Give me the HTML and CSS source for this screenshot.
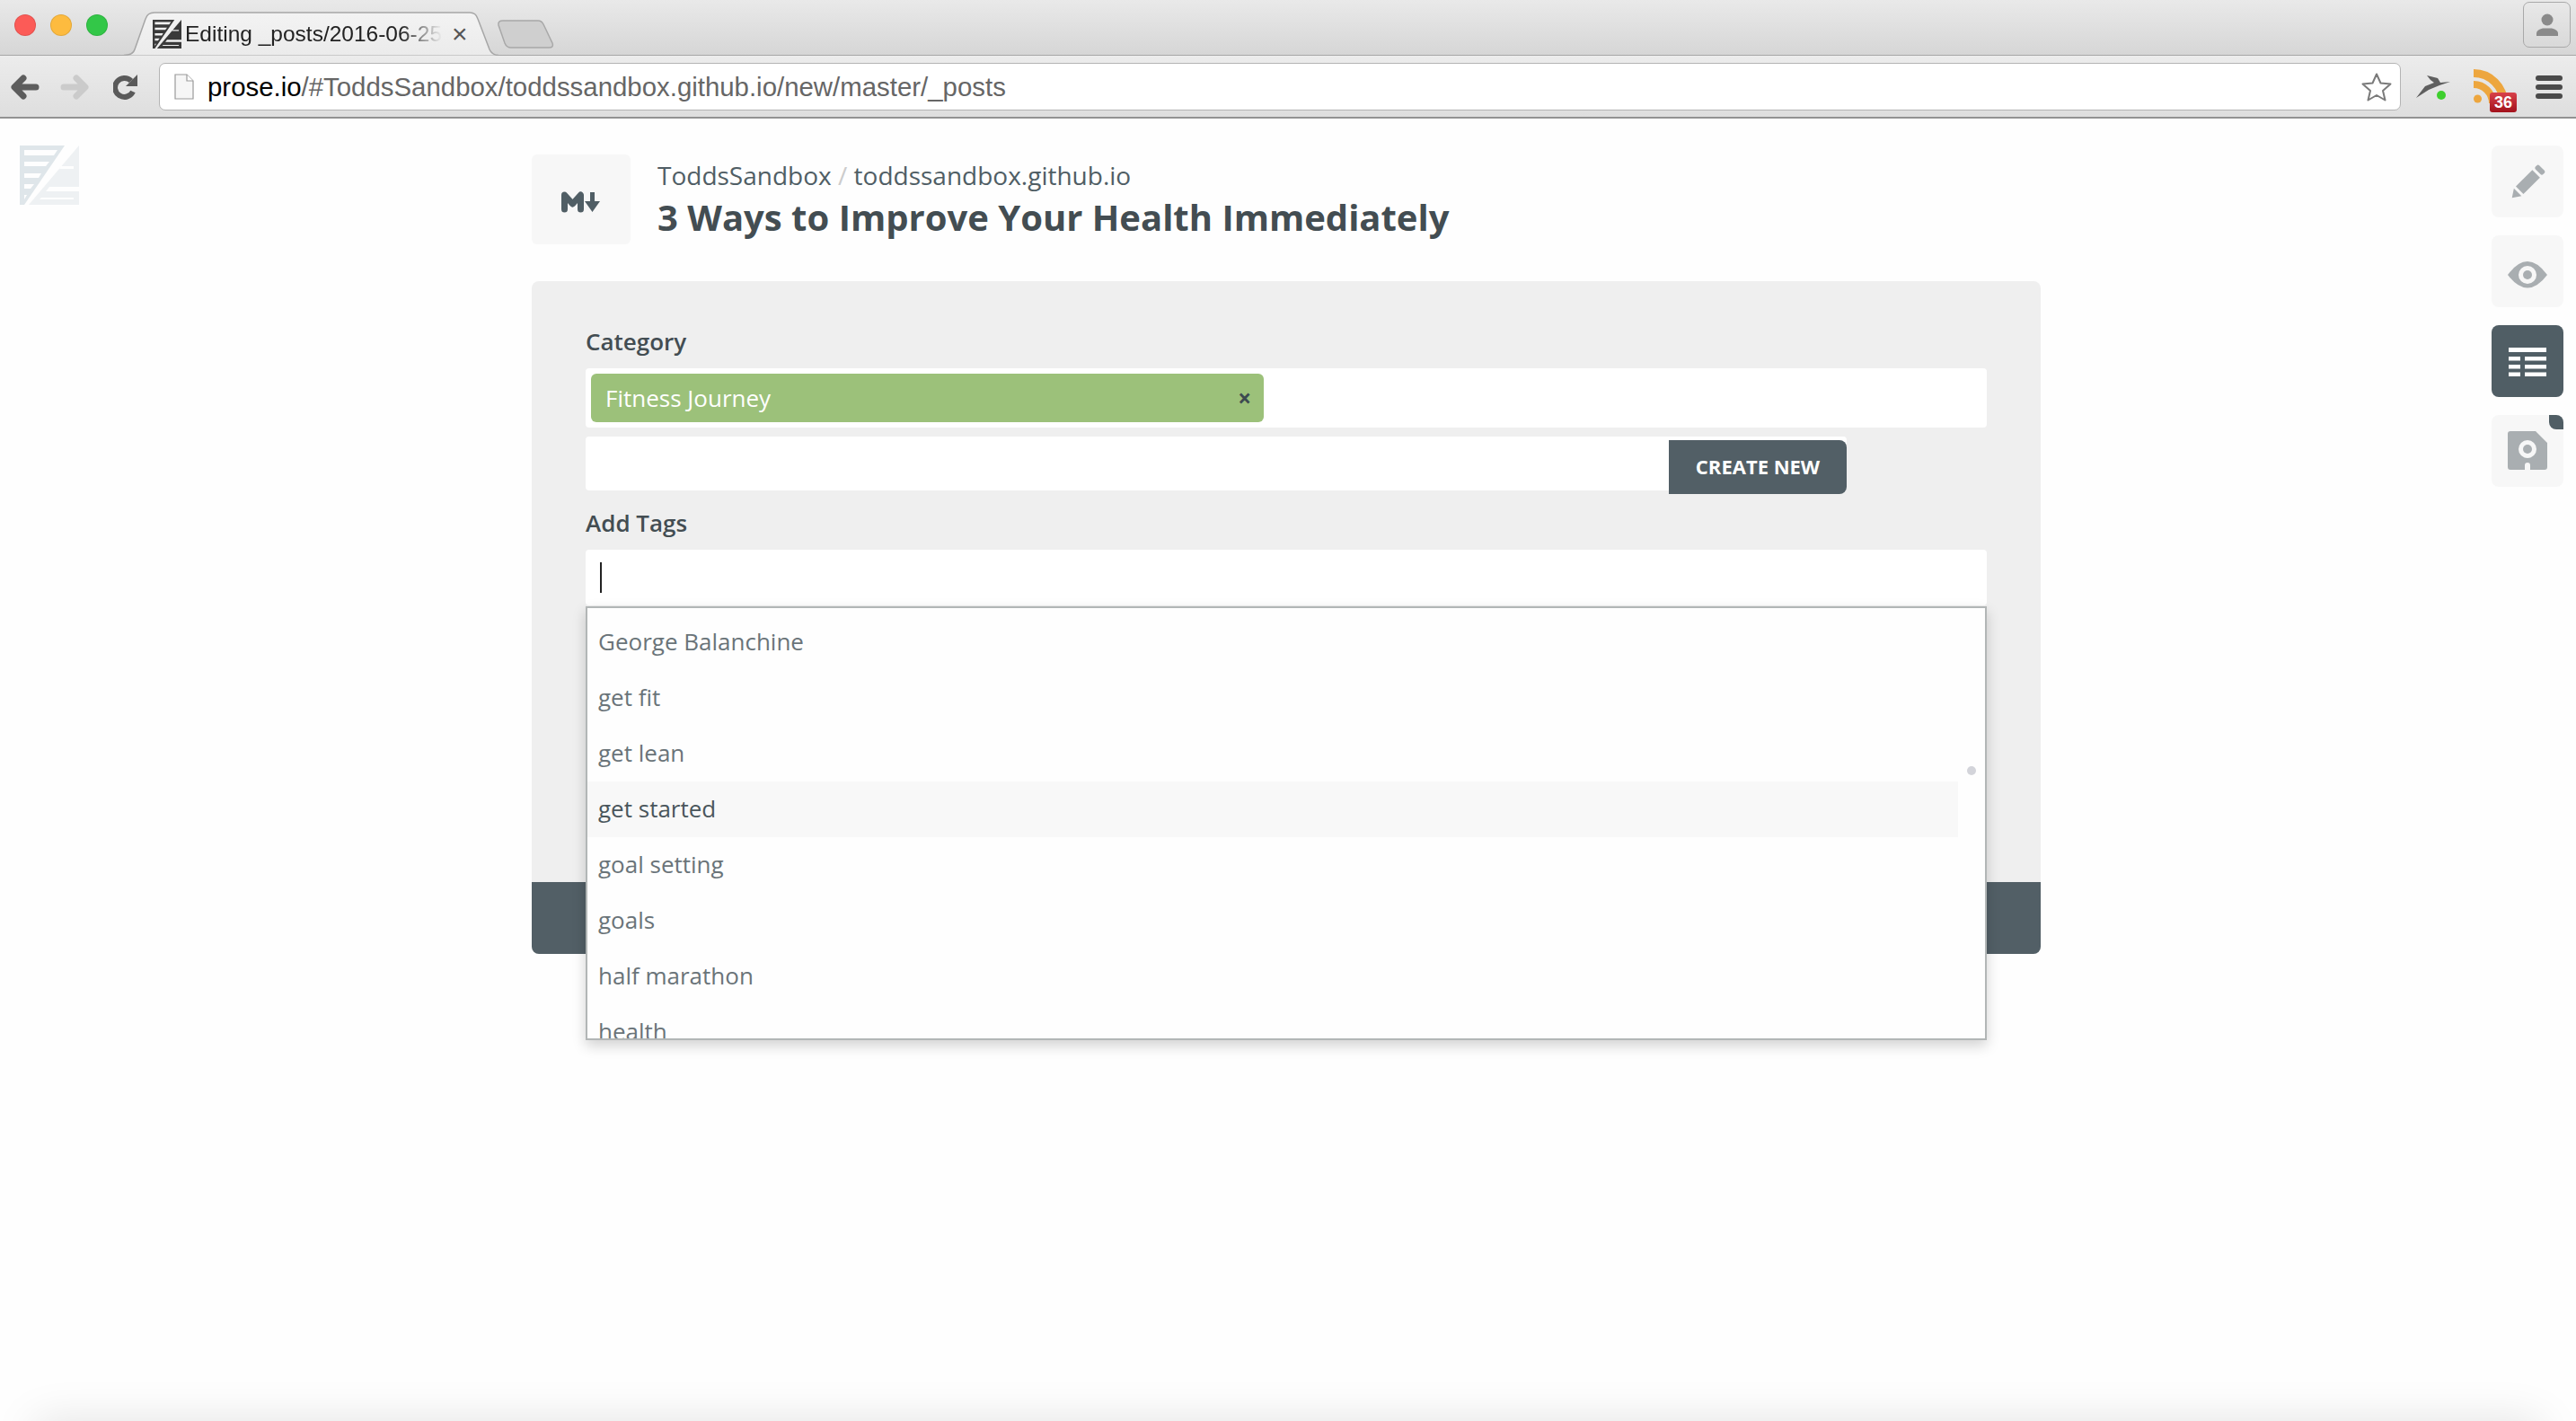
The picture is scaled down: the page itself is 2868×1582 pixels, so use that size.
FILE: index.html
```html
<!DOCTYPE html>
<html lang="en">
<head>
<meta charset="utf-8">
<title>Editing _posts/2016-06-25</title>
<link rel="stylesheet" href="styles.css">
</head>
<body>
<svg class="defs" width="0" height="0" aria-hidden="true">
  <defs>
    <linearGradient id="tabfill" x1="0" y1="0" x2="0" y2="1">
      <stop offset="0" stop-color="#f3f3f3"/>
      <stop offset="1" stop-color="#ebebeb"/>
    </linearGradient>
    <symbol id="prose" viewBox="0 0 66 66">
      <path class="pl" d="M0 0H50L5 66H0Z"/>
      <path class="pr" d="M66 0V66H10Z"/>
      <path class="ps" d="M5 5H42L38 11H5ZM5 18H33L29 23H5ZM5 31H24L21 36H5ZM5 43H16L12 48H5ZM5 55H8L5 60Z"/>
      <path class="ps" d="M46 23H60V26H44ZM33 46H66V51H29ZM24 58H60V60H22Z"/>
    </symbol>
  </defs>
</svg>
<div class="page">
  <header class="browser">
    <div class="tabbar">
      <div class="lights">
        <span class="light light-red"></span>
        <span class="light light-yellow"></span>
        <span class="light light-green"></span>
      </div>
      <div class="tab">
        <svg class="tab-shape" width="417" height="49" viewBox="0 0 417 49"><path d="M0 48.500Q10 48.500 12 42L24 8Q26 1 34 1H385Q392 1 394 8L407 42Q410 48.500 417 48.500" fill="url(#tabfill)" stroke="#a6a6a6" stroke-width="1.500"/></svg>
        <svg class="favicon" width="32" height="32"><use href="#prose"/></svg>
        <span class="tab-title">Editing _posts/2016-06-25</span>
        <span class="tab-close">×</span>
      </div>
      <svg class="newtab" width="64" height="32" viewBox="0 0 64 32"><path d="M7 1H46Q50 1 52 5L62 26Q64 31 58 31H16Q11 31 9 26L2 6Q1 1 7 1Z" fill="#cfcfcf" stroke="#a8a8a8" stroke-width="1.500"/></svg>
      <div class="profile">
        <svg width="26" height="26" viewBox="0 0 26 26"><circle cx="13" cy="7" r="6.500" fill="#8a8a8a"/><path d="M1 25V22Q1 18 8 16.500H18Q25 18 25 22V25Z" fill="#8a8a8a"/></svg>
      </div>
    </div>
    <div class="toolbar">
      <svg class="nav nav-back" width="32" height="28" viewBox="0 0 32 28"><path d="M28 14H8M14 4L4 14L14 24" fill="none" stroke="#5d5d5d" stroke-width="7" stroke-linecap="round" stroke-linejoin="round"/></svg>
      <svg class="nav nav-forward" width="32" height="28" viewBox="0 0 32 28"><path d="M4 14H24M18 4L28 14L18 24" fill="none" stroke="#cbcbcb" stroke-width="7" stroke-linecap="round" stroke-linejoin="round"/></svg>
      <svg class="nav nav-reload" width="28" height="28" viewBox="0 0 28 28"><path d="M20 7A10.500 10.500 0 1 0 22 19" fill="none" stroke="#5a5a5a" stroke-width="6"/><path d="M27 0V13H14Z" fill="#5a5a5a"/></svg>
      <div class="address">
        <svg width="22" height="29" viewBox="0 0 22 29"><path d="M1 1H14L21 8V28H1Z" fill="#f6f6f6" stroke="#9a9a9a" stroke-width="1.200"/><path d="M14 1V8H21" fill="#fff" stroke="#9a9a9a" stroke-width="1.200"/></svg>
        <span class="url"><span class="url-host">prose.io</span>/#ToddsSandbox/toddssandbox.github.io/new/master/_posts</span>
        <svg class="star" width="36" height="34" viewBox="0 0 36 34"><path d="M18 2.500L22.500 12.500L33.500 13.500L25 21L27.500 31.500L18 26L8.500 31.500L11 21L2.500 13.500L13.500 12.500Z" fill="#fff" stroke="#7a7a7a" stroke-width="2" stroke-linejoin="round"/></svg>
      </div>
      <svg class="ext-dash" width="40" height="34" viewBox="0 0 40 34"><path d="M0 30L10 17L20 13L16 10L12 5L24 8L27 13L38 12L26 16L14 21Z" fill="#5f5f5f"/><circle cx="28" cy="27" r="5" fill="#3ecf2e"/></svg>
      <div class="ext-rss">
        <svg width="38" height="38" viewBox="0 0 38 38"><circle cx="4.500" cy="33" r="4.500" fill="#eda63e"/><path d="M0 17A21 21 0 0 1 21 38" fill="none" stroke="#eda63e" stroke-width="8"/><path d="M0 4.500A33.500 33.500 0 0 1 33.500 38" fill="none" stroke="#eda63e" stroke-width="9"/></svg>
        <span class="rss-badge">36</span>
      </div>
      <div class="menu"><span></span><span></span><span></span></div>
    </div>
  </header>

  <main class="workspace">
    <aside class="rail-left">
      <svg class="logo" width="66" height="66"><use href="#prose"/></svg>
    </aside>

    <section class="center">
      <div class="heading">
        <div class="mode">
          <svg class="mode-icon" width="44" height="24" viewBox="0 0 44 24"><path d="M3.500 20V4L12.500 14L21.500 4V20" fill="none" stroke="#505e65" stroke-width="7" stroke-linecap="round" stroke-linejoin="round"/><path d="M32 1H37V11H43L34.500 23L26 11H32Z" fill="#505e65"/></svg>
        </div>
        <div class="titles">
          <div class="crumbs">ToddsSandbox <span class="slash">/</span> toddssandbox.github.io</div>
          <h1 class="title">3 Ways to Improve Your Health Immediately</h1>
        </div>
      </div>

      <div class="panel">
        <div class="panel-body">
          <label class="field-label">Category</label>
          <div class="chips">
            <div class="chip"><span>Fitness Journey</span><span class="chip-x">×</span></div>
          </div>
          <div class="create-row">
            <button class="create-btn">CREATE NEW</button>
          </div>
          <label class="field-label field-label-tags">Add Tags</label>
          <div class="tag-input"><span class="caret"></span></div>
        </div>
        <div class="panel-foot"></div>

        <div class="dropdown">
          <div class="option">George Balanchine</div>
          <div class="option">get fit</div>
          <div class="option">get lean</div>
          <div class="option option-active">get started</div>
          <div class="option">goal setting</div>
          <div class="option">goals</div>
          <div class="option">half marathon</div>
          <div class="option">health</div>
          <span class="scroll-dot"></span>
        </div>
      </div>
    </section>

    <aside class="rail-right">
      <div class="side-btn">
        <svg width="80" height="80" viewBox="0 0 80 80"><g transform="translate(-1 1) rotate(45 40 41)" fill="#a9aeb1"><rect x="34" y="17" width="12" height="6" rx="2"/><rect x="34" y="26" width="12" height="26"/><path d="M34 55H46L40 64Z"/></g></svg>
      </div>
      <div class="side-btn">
        <svg width="80" height="80" viewBox="0 0 80 80"><path d="M18 44Q40 14 62 44Q40 73 18 44Z" fill="#a9aeb1"/><circle cx="40" cy="44" r="10" fill="#f7f7f7"/><circle cx="40" cy="44" r="5" fill="#a9aeb1"/></svg>
      </div>
      <div class="side-btn side-btn-active">
        <svg width="80" height="80" viewBox="0 0 80 80"><path fill="#fff" d="M19 25H61V30H19ZM19 35H32V39.500H19ZM37 35H61V39.500H37ZM19 44H32V48.500H19ZM37 44H61V48.500H37ZM19 52.500H32V57H19ZM37 52.500H61V57H37Z"/></svg>
      </div>
      <div class="side-btn">
        <svg width="80" height="80" viewBox="0 0 80 80"><path d="M21 18H49L62 31V58A3 3 0 0 1 59 61H43V56A3 3 0 0 0 37 56V61H21A3 3 0 0 1 18 58V21A3 3 0 0 1 21 18Z" fill="#a9aeb1"/><circle cx="40" cy="38" r="10" fill="#f7f7f7"/><circle cx="40" cy="38" r="5" fill="#a9aeb1"/></svg>
        <span class="side-flag"></span>
      </div>
    </aside>
  </main>
  <div class="bottom-shadow"></div>
</div>
</body>
</html>
```
FILE: styles.css
```css
* { box-sizing: border-box; }
html, body { margin: 0; padding: 0; background: #fefefe; }
.defs { position: absolute; }
.page {
  position: relative;
  width: 2868px;
  height: 1582px;
  overflow: hidden;
  font-family: "Open Sans", "Liberation Sans", sans-serif;
  color: #505e65;
}
.pl { fill: var(--l); }
.pr { fill: var(--r); }
.ps { fill: var(--s); }

/* browser chrome */
.browser { font-family: "Liberation Sans", Arial, sans-serif; }
.tabbar {
  display: flex;
  align-items: flex-end;
  height: 62px;
  padding-left: 16px;
  background: linear-gradient(#e9e9e9, #d6d6d6);
  border-bottom: 1px solid #a6a6a6;
}
.lights { display: flex; gap: 16px; align-self: flex-start; padding-top: 16px; }
.light { width: 24px; height: 24px; border-radius: 50%; border: 1px solid rgba(0,0,0,.1); }
.light-red { background: #fc5b57; }
.light-yellow { background: #fdbb3f; }
.light-green { background: #33c748; }
.tab {
  position: relative;
  display: flex;
  align-items: flex-start;
  width: 417px;
  height: 49px;
  margin-left: 18px;
  margin-bottom: -1px;
  padding: 9px 0 0 32px;
}
.tab-shape { position: absolute; left: 0; top: 0; }
.favicon { position: relative; flex: none; --l: #3a3a3a; --r: #3a3a3a; --s: #f0f0f0; }
.tab-title {
  position: relative;
  width: 292px;
  margin-left: 4px;
  overflow: hidden;
  white-space: nowrap;
  font-size: 24.5px;
  line-height: 32px;
  color: #222;
  -webkit-mask-image: linear-gradient(to right, #000 82%, transparent 98%);
  mask-image: linear-gradient(to right, #000 82%, transparent 98%);
}
.tab-close {
  position: relative;
  margin-left: 5px;
  font-size: 30px;
  line-height: 32px;
  color: #555;
}
.newtab { flex: none; margin-left: -2px; margin-bottom: 7px; }
.profile {
  display: flex;
  align-items: center;
  justify-content: center;
  width: 53px;
  height: 51px;
  margin-left: auto;
  margin-right: 6px;
  align-self: flex-start;
  margin-top: 2px;
  border: 1px solid #a9a9a9;
  border-radius: 7px;
}
.toolbar {
  display: flex;
  align-items: center;
  height: 70px;
  padding: 1px 16px 0 12px;
  background: linear-gradient(#ececec, #dedede);
  border-bottom: 2px solid #929292;
}
.nav { flex: none; }
.nav-forward { margin-left: 23px; }
.nav-reload { margin-left: 27px; }
.address {
  display: flex;
  align-items: center;
  flex: none;
  width: 2496px;
  height: 53px;
  margin-left: 23px;
  padding: 0 8px 0 16px;
  background: #fff;
  border: 1px solid #b4b4b4;
  border-radius: 7px;
}
.url {
  margin-left: 15px;
  font-size: 29.4px;
  color: #666;
  white-space: nowrap;
}
.url-host { color: #000; }
.star { margin-left: auto; }
.ext-dash { flex: none; margin-left: 17px; margin-top: -2px; }
.ext-rss { position: relative; flex: none; width: 38px; height: 38px; margin-left: 24px; margin-top: -2px; }
.rss-badge {
  position: absolute;
  left: 18px;
  top: 26px;
  width: 30px;
  height: 22px;
  background: linear-gradient(#d8414a, #a3121c);
  border-radius: 3px;
  color: #fff;
  font-size: 18px;
  font-weight: 700;
  line-height: 22px;
  text-align: center;
}
.menu { display: flex; flex-direction: column; gap: 4px; flex: none; margin-left: 31px; }
.menu span { width: 30px; height: 6px; border-radius: 3px; background: #4a4a4a; }

/* workspace */
.workspace {
  display: grid;
  grid-template-columns: 592px 1680px 1fr;
}
.rail-left { padding: 30px 0 0 22px; }
.logo { display: block; --l: #dfe6ea; --r: #eef1f3; --s: #fefefe; }
.center { padding-top: 40px; }
.heading { display: flex; height: 100px; }
.mode {
  display: flex;
  align-items: center;
  justify-content: center;
  width: 110px;
  height: 100px;
  background: #f7f7f7;
  border-radius: 6px;
}
.mode-icon { margin-top: 5px; }
.titles { margin-left: 30px; }
.crumbs {
  margin-top: 3px;
  font-size: 28px;
  line-height: 40px;
  color: #505e65;
}
.slash { color: #ccc; }
.title {
  margin: 0;
  font-size: 40px;
  line-height: 54px;
  font-weight: 700;
  color: #434d52;
}
.panel {
  position: relative;
  height: 749px;
  margin-top: 41px;
  display: flex;
  flex-direction: column;
  background: #efefef;
  border-radius: 8px;
  overflow: visible;
}
.panel-body { flex: 1; padding: 50px 60px 0; }
.panel-foot { height: 80px; background: #525f66; border-radius: 0 0 8px 8px; }
.field-label {
  display: block;
  height: 47px;
  font-size: 26px;
  font-weight: 600;
  line-height: 34px;
  color: #434d52;
}
.field-label-tags { height: 47px; margin-top: 19px; }
.chips {
  display: flex;
  height: 66px;
  padding: 6px;
  background: #fff;
  border-radius: 4px;
}
.chip {
  display: flex;
  align-items: center;
  justify-content: space-between;
  width: 749px;
  padding: 0 14px 0 16px;
  background: #9cc17a;
  border-radius: 6px;
  color: #fff;
  font-size: 26px;
  font-weight: 500;
}
.chip-x { color: #3d4a50; font-size: 26px; font-weight: 700; }
.create-row {
  display: flex;
  justify-content: flex-end;
  width: 1404px;
  height: 60px;
  margin-top: 10px;
  background: #fff;
  border-radius: 4px;
}
.create-btn {
  flex: none;
  width: 198px;
  height: 60px;
  margin-top: 4px;
  padding: 0 0 2px;
  background: #525f66;
  border: 0;
  border-radius: 0 8px 8px 0;
  color: #fff;
  font-family: inherit;
  font-size: 22px;
  font-weight: 700;
}
.tag-input {
  display: flex;
  align-items: center;
  height: 62px;
  padding-left: 16px;
  background: #fff;
  border-radius: 4px;
}
.caret { width: 2px; height: 34px; background: #222; }
.panel::after {
  content: "";
  position: absolute;
  left: 60px;
  right: 60px;
  top: 362px;
  height: 483px;
  box-shadow: 0 6px 14px rgba(0,0,0,.18);
  pointer-events: none;
}
.dropdown {
  position: absolute;
  z-index: 1;
  left: 60px;
  right: 60px;
  top: 362px;
  height: 483px;
  padding: 7px 30px 0 0;
  overflow: hidden;
  background: #fefefe;
  border: 2px solid #b2b6b6;
}
.option {
  height: 62px;
  padding-left: 12px;
  font-size: 26px;
  line-height: 60px;
  color: #6a7479;
}
.option-active { background: #f8f8f8; color: #4a565c; font-weight: 500; }
.scroll-dot {
  position: absolute;
  right: 10px;
  top: 176px;
  width: 10px;
  height: 10px;
  border-radius: 50%;
  background: #d3d4da;
}

/* right rail */
.rail-right {
  display: flex;
  flex-direction: column;
  align-items: flex-end;
  gap: 20px;
  padding: 30px 14px 0 0;
}
.side-btn {
  position: relative;
  width: 80px;
  height: 80px;
  background: #f7f7f7;
  border-radius: 8px;
}
.side-btn svg { display: block; }
.side-btn-active { background: #505e65; }
.side-flag {
  position: absolute;
  right: 0;
  top: 0;
  width: 16px;
  height: 16px;
  background: #505e65;
  border-radius: 0 8px 0 8px;
}
.bottom-shadow {
  position: absolute;
  left: 40px;
  right: 40px;
  top: 1584px;
  height: 40px;
  box-shadow: 0 0 50px rgba(0,0,0,.13);
}
```
